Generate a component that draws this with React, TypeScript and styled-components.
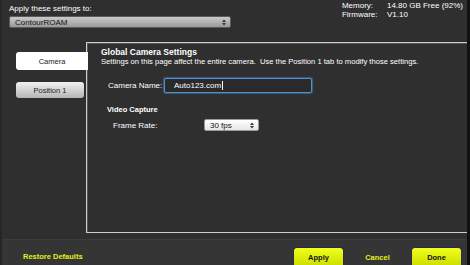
import React from "react";
import styled, { createGlobalStyle } from "styled-components";

const GlobalStyle = createGlobalStyle`
  html, body {
    margin: 0;
    padding: 0;
    background: #2e2e2e;
  }
  body {
    font-family: "Liberation Sans", Arial, sans-serif;
    color: #fff;
  }
`;

const Screen = styled.div`
  width: 470px;
  height: 265px;
  overflow: hidden;
  display: flex;
  flex-direction: column;
  background: #2f2f2f;
  border-left: 2px solid #262626;
  border-right: 3px solid #111;
  box-sizing: border-box;
`;

const Header = styled.div`
  height: 36px;
  box-sizing: border-box;
  display: flex;
  justify-content: space-between;
  align-items: flex-start;
  padding: 3px 0 0 7px;
`;

const TargetBox = styled.div`
  display: flex;
  flex-direction: column;
  gap: 2px;
`;

const SmallLabel = styled.div`
  font-size: 8px;
  line-height: 10px;
  padding-top: 1px;
`;

const DropDown = styled.div<{ $light?: boolean; $width: number }>`
  width: ${(p) => p.$width}px;
  height: 12px;
  box-sizing: border-box;
  display: flex;
  align-items: center;
  justify-content: space-between;
  padding: 0 4px 0 5px;
  border-radius: 2px;
  font-size: 8px;
  color: #111;
  background: ${(p) =>
    p.$light
      ? "linear-gradient(#ffffff, #e6e6e6)"
      : "linear-gradient(#c9c9c9, #9a9a9a)"};
  border: 1px solid ${(p) => (p.$light ? "#9a9a9a" : "#5a5a5a")};
`;

const Arrows = styled.svg`
  width: 4px;
  height: 7px;
`;

const InfoGrid = styled.div`
  display: grid;
  grid-template-columns: 45px auto;
  align-content: start;
  font-size: 8px;
  line-height: 9px;
  padding: 0 4px 0 0;
  margin-top: -2px;
`;

const Main = styled.div`
  flex: 1;
  display: flex;
  padding: 6px 0 6px 0;
`;

const Tabs = styled.div`
  width: 84px;
  padding: 10px 0 0 14px;
  box-sizing: border-box;
  display: flex;
  flex-direction: column;
  gap: 12px;
`;

const Tab = styled.div<{ $active?: boolean }>`
  height: ${(p) => (p.$active ? 18 : 16)}px;
  margin-right: ${(p) => (p.$active ? -2 : 2)}px;
  display: flex;
  align-items: center;
  justify-content: center;
  font-size: 7.5px;
  color: #222;
  border-radius: ${(p) => (p.$active ? "3px 0 0 3px" : "3px")};
  background: ${(p) =>
    p.$active ? "#fff" : "linear-gradient(#f2f2f2, #b5b5b5)"};
  position: relative;
  z-index: 1;
`;

const Panel = styled.div`
  flex: 1;
  border: 1px solid #cfcfcf;
  box-shadow: inset 1px 1px 0 #555;
  border-right: none;
  padding: 4px 14px;
  display: flex;
  flex-direction: column;
`;

const Title = styled.div`
  font-size: 8.5px;
  font-weight: bold;
  line-height: 10px;
`;

const Subtitle = styled.div`
  font-size: 7.6px;
  line-height: 9px;
  white-space: pre;
`;

const Row = styled.div<{ $indent: number; $top: number }>`
  display: flex;
  align-items: center;
  margin: ${(p) => p.$top}px 0 0 ${(p) => p.$indent}px;
`;

const FieldLabel = styled.div<{ $width: number }>`
  width: ${(p) => p.$width}px;
  font-size: 8px;
`;

const Section = styled.div`
  font-size: 7.5px;
  font-weight: bold;
  margin: 12px 0 0 6px;
`;

const TextInput = styled.div`
  width: 148px;
  height: 15px;
  box-sizing: border-box;
  border: 1px solid #4f8fd0;
  box-shadow: 0 0 1px 1px rgba(80, 140, 210, 0.5);
  border-radius: 2px;
  background: #2a2a2a;
  font-size: 8px;
  display: flex;
  align-items: center;
  padding-left: 9px;
`;

const Caret = styled.span`
  display: inline-block;
  width: 1px;
  height: 9px;
  background: #fff;
  margin-left: 1px;
`;

const Footer = styled.div`
  height: 25px;
  background: #353535;
  border-top: 1px solid #3c3c3c;
  display: flex;
  align-items: flex-end;
  padding: 0 5px 0 21px;
`;

const LinkText = styled.div`
  color: #e3f21a;
  font-size: 7.5px;
  font-weight: bold;
  padding-bottom: 4px;
`;

const Spacer = styled.div`
  flex: 1;
`;

const ActionButton = styled.div`
  width: 51px;
  height: 18px;
  box-sizing: border-box;
  border: 1px solid #2a2a55;
  border-bottom: none;
  border-radius: 4px 4px 0 0;
  background: linear-gradient(#f0ff1a, #cfe000);
  color: #111;
  font-size: 7.5px;
  font-weight: bold;
  display: flex;
  align-items: center;
  justify-content: center;
  padding-top: 2px;
`;

const CancelLink = styled(LinkText)`
  width: 67px;
  text-align: center;
  padding-bottom: 3px;
`;

function UpDown() {
  return (
    <Arrows viewBox="0 0 4 7">
      <path d="M0 3 L2 0.5 L4 3 Z M0 4 L2 6.5 L4 4 Z" fill="#333" />
    </Arrows>
  );
}

export default function App() {
  return (
    <Screen>
      <GlobalStyle />
      <Header>
        <TargetBox>
          <SmallLabel>Apply these settings to:</SmallLabel>
          <DropDown $width={222}>
            <span>ContourROAM</span>
            <UpDown />
          </DropDown>
        </TargetBox>
        <InfoGrid>
          <span>Memory:</span>
          <span>14.80 GB Free (92%)</span>
          <span>Firmware:</span>
          <span>V1.10</span>
        </InfoGrid>
      </Header>
      <Main>
        <Tabs>
          <Tab $active>Camera</Tab>
          <Tab>Position 1</Tab>
        </Tabs>
        <Panel>
          <Title>Global Camera Settings</Title>
          <Subtitle>
            Settings on this page affect the entire camera.  Use the Position 1 tab to modify those settings.
          </Subtitle>
          <Row $indent={7} $top={12}>
            <FieldLabel $width={56}>Camera Name:</FieldLabel>
            <TextInput>
              Auto123.com
              <Caret />
            </TextInput>
          </Row>
          <Section>Video Capture</Section>
          <Row $indent={12} $top={5}>
            <FieldLabel $width={91}>Frame Rate:</FieldLabel>
            <DropDown $light $width={55}>
              <span>30 fps</span>
              <UpDown />
            </DropDown>
          </Row>
        </Panel>
      </Main>
      <Footer>
        <LinkText>Restore Defaults</LinkText>
        <Spacer />
        <ActionButton>Apply</ActionButton>
        <CancelLink>Cancel</CancelLink>
        <ActionButton>Done</ActionButton>
      </Footer>
    </Screen>
  );
}
